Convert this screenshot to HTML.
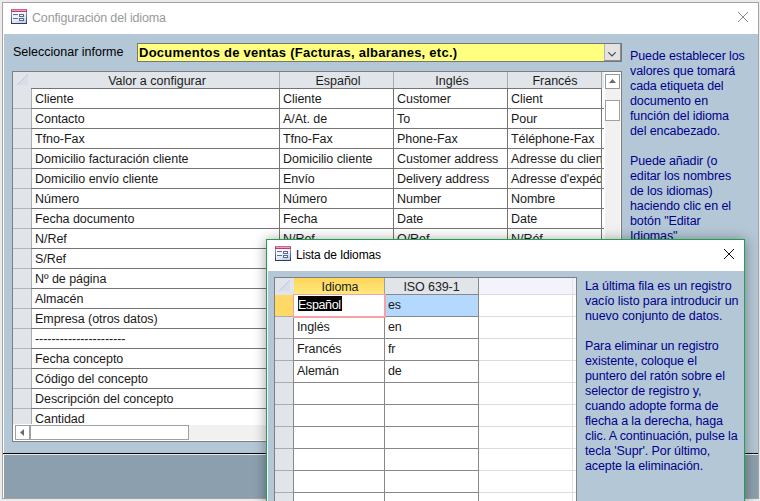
<!DOCTYPE html>
<html>
<head>
<meta charset="utf-8">
<title>Configuración del idioma</title>
<style>
html,body{margin:0;padding:0;}
html{overflow:hidden;width:760px;height:501px;}
body{width:760px;height:501px;overflow:hidden;background:#ebebeb;position:relative;font-family:"Liberation Sans",sans-serif;font-size:12.5px;color:#000;letter-spacing:-0.1px;}
div,span{box-sizing:border-box;}
.abs{position:absolute;}
#win{position:absolute;left:2px;top:2px;width:757px;height:497px;border:1px solid #a3a3a3;background:#fff;}
#content{position:absolute;left:4px;top:34px;width:754px;height:419px;background:#b4c7d6;}
#blackline{position:absolute;left:3px;top:453px;width:755px;height:1px;background:#000;}
#whiteline{position:absolute;left:3px;top:454px;width:755px;height:1px;background:#e8eef2;}
#footer{position:absolute;left:4px;top:455px;width:754px;height:43px;background:#8b9fae;}
.title{position:absolute;white-space:nowrap;font-size:12.5px;line-height:16px;letter-spacing:-0.16px;}
.lbl{position:absolute;white-space:nowrap;line-height:15px;letter-spacing:0;}
.help{position:absolute;color:#00008b;line-height:15px;white-space:nowrap;}
/* main grid */
#grid{position:absolute;left:12px;top:71px;width:610px;height:371px;border:1px solid #7f7f7f;background:#fff;overflow:hidden;}
.hdr{position:absolute;top:0;height:16px;background:#e1e5ea;text-align:center;line-height:18px;color:#1a1a1a;white-space:nowrap;overflow:hidden;letter-spacing:0;}
.row{position:absolute;left:0;height:20px;width:591px;border-bottom:1px solid #757575;}
.sel{position:absolute;left:0;top:0;width:18px;height:20px;background:#e1e5ea;border-bottom:1px solid #b3b7bd;}
.c{position:absolute;top:0;height:19px;line-height:21px;padding-left:3px;white-space:nowrap;overflow:hidden;border-left:1px solid #757575;background:#fff;color:#1a1a1a;letter-spacing:-0.05px;}
.c1{left:18px;width:248px;border-left-color:#a9adb5;}
.c2{left:266px;width:114px;}
.c3{left:380px;width:114px;}
.c4{left:494px;width:94px;}

/* popup */
#pop{position:absolute;left:266px;top:239px;width:479px;height:300px;border:1px solid #21a04c;background:#fff;box-shadow:0 1px 12px rgba(0,0,0,.38);}
#popc{position:absolute;left:268px;top:271px;width:476px;height:230px;background:#b4c7d6;}
#pgrid{position:absolute;left:274px;top:277px;width:303px;height:224px;border:1px solid #7f7f7f;border-bottom:none;background:#fff;overflow:hidden;}
.prow{position:absolute;left:0;width:301px;height:22px;}
.psel{position:absolute;left:0;top:0;width:18px;height:22px;border-bottom:1px solid #a9adb3;z-index:2;}
.pc{position:absolute;top:0;height:21px;line-height:21px;padding-left:3px;white-space:nowrap;overflow:hidden;border-left:1px solid #888;color:#1a1a1a;}
.pc1{left:18px;width:91px;}
.pc2{left:109px;width:95px;border-right:1px solid #888;}
.pline{position:absolute;left:0;top:21px;width:204px;height:1px;background:#888;}
.pline2{position:absolute;left:204px;top:21px;width:97px;height:1px;background:#dcdcdc;}
</style>
</head>
<body>
<div id="stage" style="position:absolute;left:0;top:0;width:760px;height:501px;overflow:hidden;">
<div id="win"></div>
<div id="content"></div>
<div id="blackline"></div>
<div id="whiteline"></div>
<div id="footer"></div>

<!-- main title bar -->
<svg class="abs" style="left:11px;top:9px" width="16" height="15" viewBox="0 0 16 15" shape-rendering="crispEdges">
 <defs><linearGradient id="g1" x1="0" y1="0" x2="0.6" y2="1"><stop offset="0" stop-color="#ffffff"/><stop offset="0.45" stop-color="#f3f6fc"/><stop offset="1" stop-color="#c3d0ea"/></linearGradient>
 <linearGradient id="g2" x1="0" y1="0" x2="0" y2="1"><stop offset="0" stop-color="#8d9bb8"/><stop offset="1" stop-color="#2c3c5e"/></linearGradient></defs>
 <rect x="0" y="3" width="16" height="12" fill="url(#g1)"/>
 <rect x="0" y="3" width="1" height="12" fill="url(#g2)"/>
 <rect x="15" y="3" width="1" height="12" fill="url(#g2)"/>
 <rect x="0" y="14" width="16" height="1" fill="#2c3c5e"/>
 <rect x="0" y="0" width="16" height="1" fill="#d0668f"/>
 <rect x="0" y="1" width="16" height="2" fill="#c03a70"/>
 <rect x="1" y="1" width="14" height="1" fill="#e7a3ba"/>
 <rect x="2" y="5" width="5" height="1" fill="#5a70a2"/>
 <rect x="2" y="6" width="5" height="1" fill="#e9eef8"/>
 <rect x="2" y="9" width="5" height="1" fill="#5a70a2"/>
 <rect x="2" y="10" width="5" height="1" fill="#e9eef8"/>
 <rect x="8" y="5" width="5" height="3" fill="#5c6a8c"/>
 <rect x="9" y="6" width="3" height="1" fill="#f4f6fb"/>
 <rect x="8" y="9" width="5" height="3" fill="#5c6a8c"/>
 <rect x="9" y="10" width="3" height="1" fill="#f4f6fb"/>
</svg>
<div class="title" id="t1" style="left:32px;top:10px;color:#999;">Configuración del idioma</div>
<svg class="abs" style="left:737px;top:11px" width="12" height="12" viewBox="0 0 12 12"><path d="M1 1 L11 11 M11 1 L1 11" stroke="#8a8a8a" stroke-width="1" fill="none"/></svg>

<!-- selector row -->
<div class="lbl" id="l1" style="left:13px;top:45px;">Seleccionar informe</div>
<div class="abs" id="combo" style="left:137px;top:43px;width:485px;height:19px;border:1px solid #777779;background:#ffff80;">
  <div class="abs" id="combotxt" style="left:1px;top:0;line-height:17px;font-weight:bold;font-size:13px;letter-spacing:0.25px;white-space:nowrap;">Documentos de ventas (Facturas, albaranes, etc.)</div>
  <div class="abs" style="left:466px;top:0;width:17px;height:17px;background:#e3e3e3;border-left:1px solid #b4b4b4;border-right:1px solid #8c8c8c;border-bottom:1px solid #8c8c8c;">
    <svg class="abs" style="left:3px;top:8px" width="8" height="5" viewBox="0 0 8 5"><path d="M0.3 0.3 L4 4 L7.7 0.3" stroke="#444" stroke-width="1.1" fill="none"/></svg>
  </div>
</div>

<!-- right help text -->
<div class="help" id="h1" style="left:630px;top:49px;">Puede establecer los<br>valores que tomará<br>cada etiqueta del<br>documento en<br>función del idioma<br>del encabezado.<br><br>Puede añadir (o<br>editar los nombres<br>de los idiomas)<br>haciendo clic en el<br>botón "Editar<br>Idiomas"</div>

<!-- main grid -->
<div id="grid">
  <div class="hdr" style="left:0;width:588px;"></div>
  <svg class="abs" style="left:4px;top:2px" width="12" height="11" viewBox="0 0 12 11"><polygon points="11,0 11,11 0,11" fill="#d8dde7"/><path d="M0 11 L11 0" stroke="#b4cbef" stroke-width="1"/></svg>
  <div class="hdr" style="left:19px;width:247px;padding-left:3px;">Valor a configurar</div>
  <div class="hdr" style="left:266px;width:114px;border-left:1px solid #a6a9ad;padding-left:3px;">Español</div>
  <div class="hdr" style="left:380px;width:114px;border-left:1px solid #a6a9ad;padding-left:3px;">Inglés</div>
  <div class="hdr" style="left:494px;width:94px;border-left:1px solid #a6a9ad;padding-left:1px;">Francés</div>
  <div class="abs" style="left:588px;top:0;width:1px;height:16px;background:#a3a7ae;"></div>
  <div class="abs" style="left:589px;top:0;width:2px;height:16px;background:#e6e9ee;"></div>
  <div class="abs" style="left:18px;top:16px;width:571px;height:1px;background:#757575;"></div>
  <div class="abs" style="left:0;top:16px;width:18px;height:1px;background:#e1e5ea;"></div>
  <div id="rows" class="abs" style="left:0;top:17px;width:591px;height:335px;overflow:hidden;">
    <div class="row" style="top:0px"><div class="sel"></div><div class="c c1">Cliente</div><div class="c c2">Cliente</div><div class="c c3">Customer</div><div class="c c4">Client</div></div>
    <div class="row" style="top:20px"><div class="sel"></div><div class="c c1">Contacto</div><div class="c c2">A/At. de</div><div class="c c3">To</div><div class="c c4">Pour</div></div>
    <div class="row" style="top:40px"><div class="sel"></div><div class="c c1">Tfno-Fax</div><div class="c c2">Tfno-Fax</div><div class="c c3">Phone-Fax</div><div class="c c4">Téléphone-Fax</div></div>
    <div class="row" style="top:60px"><div class="sel"></div><div class="c c1">Domicilio facturación cliente</div><div class="c c2">Domicilio cliente</div><div class="c c3">Customer address</div><div class="c c4">Adresse du client</div></div>
    <div class="row" style="top:80px"><div class="sel"></div><div class="c c1">Domicilio envío cliente</div><div class="c c2">Envío</div><div class="c c3">Delivery address</div><div class="c c4">Adresse d&#x27;expédition</div></div>
    <div class="row" style="top:100px"><div class="sel"></div><div class="c c1">Número</div><div class="c c2">Número</div><div class="c c3">Number</div><div class="c c4">Nombre</div></div>
    <div class="row" style="top:120px"><div class="sel"></div><div class="c c1">Fecha documento</div><div class="c c2">Fecha</div><div class="c c3">Date</div><div class="c c4">Date</div></div>
    <div class="row" style="top:140px"><div class="sel"></div><div class="c c1">N/Ref</div><div class="c c2">N/Ref</div><div class="c c3">O/Ref</div><div class="c c4">N/Réf</div></div>
    <div class="row" style="top:160px"><div class="sel"></div><div class="c c1">S/Ref</div><div class="c c2">S/Ref</div><div class="c c3">Y/Ref</div><div class="c c4">V/Réf</div></div>
    <div class="row" style="top:180px"><div class="sel"></div><div class="c c1">Nº de página</div><div class="c c2">Nº de página</div><div class="c c3">Page No.</div><div class="c c4">Nº de page</div></div>
    <div class="row" style="top:200px"><div class="sel"></div><div class="c c1">Almacén</div><div class="c c2">Almacén</div><div class="c c3">Warehouse</div><div class="c c4">Magasin</div></div>
    <div class="row" style="top:220px"><div class="sel"></div><div class="c c1">Empresa (otros datos)</div><div class="c c2"></div><div class="c c3"></div><div class="c c4"></div></div>
    <div class="row" style="top:240px"><div class="sel"></div><div class="c c1">----------------------</div><div class="c c2"></div><div class="c c3"></div><div class="c c4"></div></div>
    <div class="row" style="top:260px"><div class="sel"></div><div class="c c1">Fecha concepto</div><div class="c c2">Fecha</div><div class="c c3">Date</div><div class="c c4">Date</div></div>
    <div class="row" style="top:280px"><div class="sel"></div><div class="c c1">Código del concepto</div><div class="c c2">Código</div><div class="c c3">Code</div><div class="c c4">Code</div></div>
    <div class="row" style="top:300px"><div class="sel"></div><div class="c c1">Descripción del concepto</div><div class="c c2">Descripción</div><div class="c c3">Description</div><div class="c c4">Description</div></div>
    <div class="row" style="top:320px"><div class="sel"></div><div class="c c1">Cantidad</div><div class="c c2">Cantidad</div><div class="c c3">Quantity</div><div class="c c4">Quantité</div></div>
  </div>
  <div class="abs" style="left:588px;top:17px;width:1px;height:335px;background:#757575;"></div>
  <!-- vertical scrollbar -->
  <div class="abs" style="left:592px;top:17px;width:15px;height:336px;background:#f1f1f1;"></div>
  <div class="abs" style="left:592px;top:2px;width:15px;height:15px;border:1px solid #979797;background:#fff;">
    <svg class="abs" style="left:3px;top:4px" width="7" height="4" viewBox="0 0 7 4"><polygon points="3.5,0 7,4 0,4" fill="#6a6a6a"/></svg>
  </div>
  <div class="abs" style="left:592px;top:28px;width:15px;height:21px;border:1px solid #a0a0a0;background:#fff;"></div>
  <!-- horizontal scrollbar -->
  <div class="abs" style="left:0;top:352px;width:608px;height:17px;background:#fff;"></div>
  <div class="abs" style="left:2px;top:353px;width:590px;height:15px;background:#f1f1f1;"></div>
  <div class="abs" style="left:2px;top:353px;width:15px;height:15px;border:1px solid #a0a0a0;background:#fff;">
    <svg class="abs" style="left:4px;top:3px" width="4" height="7" viewBox="0 0 4 7"><polygon points="0,3.5 4,0 4,7" fill="#6a6a6a"/></svg>
  </div>
  <div class="abs" style="left:17px;top:353px;width:159px;height:15px;border:1px solid #a0a0a0;background:#fff;"></div>
</div>

<div id="pop"></div>
<div id="popc"></div>
<svg class="abs" style="left:275px;top:246px" width="16" height="15" viewBox="0 0 16 15" shape-rendering="crispEdges">
 <rect x="0" y="3" width="16" height="12" fill="url(#g1)"/>
 <rect x="0" y="3" width="1" height="12" fill="url(#g2)"/>
 <rect x="15" y="3" width="1" height="12" fill="url(#g2)"/>
 <rect x="0" y="14" width="16" height="1" fill="#2c3c5e"/>
 <rect x="0" y="0" width="16" height="1" fill="#d0668f"/>
 <rect x="0" y="1" width="16" height="2" fill="#c03a70"/>
 <rect x="1" y="1" width="14" height="1" fill="#e7a3ba"/>
 <rect x="2" y="5" width="5" height="1" fill="#5a70a2"/>
 <rect x="2" y="6" width="5" height="1" fill="#e9eef8"/>
 <rect x="2" y="9" width="5" height="1" fill="#5a70a2"/>
 <rect x="2" y="10" width="5" height="1" fill="#e9eef8"/>
 <rect x="8" y="5" width="5" height="3" fill="#5c6a8c"/>
 <rect x="9" y="6" width="3" height="1" fill="#f4f6fb"/>
 <rect x="8" y="9" width="5" height="3" fill="#5c6a8c"/>
 <rect x="9" y="10" width="3" height="1" fill="#f4f6fb"/>
</svg>
<div class="title" id="t2" style="left:296px;top:247px;color:#000;font-size:12px;">Lista de Idiomas</div>
<svg class="abs" style="left:723px;top:248px" width="12" height="12" viewBox="0 0 12 12"><path d="M1 1 L11 11 M11 1 L1 11" stroke="#111" stroke-width="1" fill="none"/></svg>
<div id="pgrid">
  <div class="abs" style="left:0;top:0;width:18px;height:16px;background:#e1e5ea;"></div>
  <svg class="abs" style="left:4px;top:2px" width="12" height="11" viewBox="0 0 12 11"><polygon points="11,0 11,11 0,11" fill="#d8dde7"/><path d="M0 11 L11 0" stroke="#b4cbef" stroke-width="1"/></svg>
  <div class="abs" id="ph1" style="left:18px;top:0;width:91px;height:16px;background:linear-gradient(#ffd55a,#ffe97c);text-align:center;line-height:18px;color:#222;border-left:1px solid #e1e5ea;padding-left:2px;">Idioma</div>
  <div class="abs" id="ph2" style="left:109px;top:0;width:95px;height:16px;background:#e1e5ea;text-align:center;line-height:18px;color:#222;border-left:1px solid #9aa0a8;border-right:1px solid #888;">ISO 639-1</div>
  <div class="abs" style="left:204px;top:0;width:97px;height:16px;background:#f3f4fb;"></div>
  <div class="abs" style="left:18px;top:16px;width:186px;height:1px;background:#888;"></div>
  <div class="abs" style="left:0;top:16px;width:18px;height:1px;background:#e1e5ea;"></div>
  <div class="abs" style="left:204px;top:16px;width:97px;height:1px;background:#dcdcdc;"></div>
  <div class="abs" style="left:297px;top:0;width:1px;height:240px;background:#e2e2e2;"></div>
  <div class="prow" style="top:17px"><div class="psel" style="background:#ffd966"></div><div class="pc pc1">Español</div><div class="pc pc2" style="background:#b5d8ff">es</div><div class="pline"></div><div class="pline2"></div></div>
  <div class="prow" style="top:39px"><div class="psel" style="background:#e1e5ea"></div><div class="pc pc1">Inglés</div><div class="pc pc2" style="background:#fff">en</div><div class="pline"></div><div class="pline2"></div></div>
  <div class="prow" style="top:61px"><div class="psel" style="background:#e1e5ea"></div><div class="pc pc1">Francés</div><div class="pc pc2" style="background:#fff">fr</div><div class="pline"></div><div class="pline2"></div></div>
  <div class="prow" style="top:83px"><div class="psel" style="background:#e1e5ea"></div><div class="pc pc1">Alemán</div><div class="pc pc2" style="background:#fff">de</div><div class="pline"></div><div class="pline2"></div></div>
  <div class="prow" style="top:105px"><div class="psel" style="background:#e1e5ea"></div><div class="pc pc1"></div><div class="pc pc2" style="background:#fff"></div><div class="pline"></div><div class="pline2"></div></div>
  <div class="prow" style="top:127px"><div class="psel" style="background:#e1e5ea"></div><div class="pc pc1"></div><div class="pc pc2" style="background:#fff"></div><div class="pline"></div><div class="pline2"></div></div>
  <div class="prow" style="top:149px"><div class="psel" style="background:#e1e5ea"></div><div class="pc pc1"></div><div class="pc pc2" style="background:#fff"></div><div class="pline"></div><div class="pline2"></div></div>
  <div class="prow" style="top:171px"><div class="psel" style="background:#e1e5ea"></div><div class="pc pc1"></div><div class="pc pc2" style="background:#fff"></div><div class="pline"></div><div class="pline2"></div></div>
  <div class="prow" style="top:193px"><div class="psel" style="background:#e1e5ea"></div><div class="pc pc1"></div><div class="pc pc2" style="background:#fff"></div><div class="pline"></div><div class="pline2"></div></div>
  <div class="prow" style="top:215px"><div class="psel" style="background:#e1e5ea"></div><div class="pc pc1"></div><div class="pc pc2" style="background:#fff"></div><div class="pline"></div><div class="pline2"></div></div>
  <div class="abs" style="left:18px;top:16px;width:93px;height:24px;border:1px solid #f9a0a5;border-right-width:2px;border-bottom-width:2px;background:#fff;"></div>
  <div class="abs" id="hl" style="left:23px;top:18px;height:15px;line-height:19px;overflow:hidden;width:44px;letter-spacing:-0.35px;background:#000;color:#fff;white-space:nowrap;">Español</div>
</div>
<div class="help" id="h2" style="left:585px;top:279px;">La última fila es un registro<br>vacío listo para introducir un<br>nuevo conjunto de datos.<br><br>Para eliminar un registro<br>existente, coloque el<br>puntero del ratón sobre el<br>selector de registro y,<br>cuando adopte forma de<br>flecha a la derecha, haga<br>clic. A continuación, pulse la<br>tecla 'Supr'. Por último,<br>acepte la eliminación.</div>
</div>
</body>
</html>
